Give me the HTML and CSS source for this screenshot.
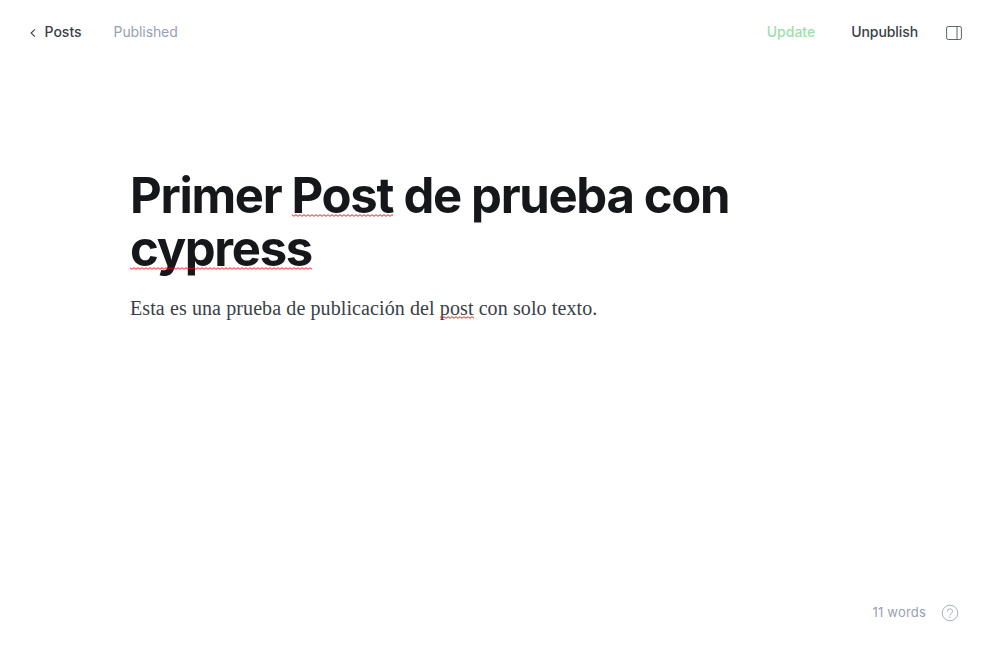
FILE: index.html
```html
<!DOCTYPE html>
<html lang="es">
<head>
<meta charset="utf-8">
<title>Editor</title>
<link rel="stylesheet" href="styles.css">
</head>
<body>
<div class="editor">
  <header class="topbar">
    <a class="back"><svg class="chevron" width="6" height="8" viewBox="0 0 6 8"><path d="M4.9 .4 1.1 4l3.8 3.6"/></svg>Posts</a>
    <span class="status">Published</span>
    <div class="actions">
      <span class="update">Update</span>
      <span class="unpublish">Unpublish</span>
      <svg class="panel" width="16" height="16" viewBox="0 0 16 16"><rect x=".6" y="1.5" width="14.8" height="13" rx="1.6"/><path d="M11 1.5v13"/></svg>
    </div>
  </header>
  <main class="content">
    <h1 class="title">Primer <span class="misspelled">Post</span> de prueba con <span class="misspelled">cypress</span></h1>
    <p class="text">Esta es una prueba de publicación del <span class="misspelled">post</span> con solo texto.</p>
  </main>
  <footer class="footer">
    <span class="count">11 words</span>
    <svg class="help" width="18" height="18" viewBox="0 0 18 18"><circle cx="9" cy="9" r="7.8"/><path d="M6.5 7.4a2.5 2.5 0 1 1 3.6 2.1c-.8.4-1.1.8-1.1 1.9"/><circle class="dot" cx="9" cy="13.1" r=".7"/></svg>
  </footer>
</div>
</body>
</html>
```
FILE: styles.css
```css
* { box-sizing: border-box; }
body { margin: 0; background: #fff; font-family: Inter, sans-serif; }
.editor { height: 660px; display: flex; flex-direction: column; }
.topbar { height: 64px; padding: 0 38px 0 30px; display: flex; align-items: center; font-size: 14px; line-height: 20px; }
.back { display: flex; align-items: center; gap: 8.5px; color: #394047; font-weight: 500; }
.chevron { fill: none; stroke: #394047; stroke-width: 1.1; margin-top: 2px; }
.status { margin-left: 32px; color: #95a1b5; letter-spacing: -.1px; }
.actions { margin-left: auto; display: flex; align-items: center; font-weight: 500; }
.update { color: #9bdfa9; }
.unpublish { margin-left: 36px; color: #394047; letter-spacing: -.08px; }
.panel { margin: 2px 0 0 28px; fill: none; stroke: #5d646b; }
.content { flex: 1; width: 740px; margin: 0 auto; padding-top: 105px; }
.title { margin: 0; font-size: 49px; line-height: 53px; font-weight: 700; letter-spacing: -1.32px; color: #15171a; }
.text { margin: 17px 0 0; font-family: "Liberation Serif", serif; font-size: 20px; line-height: 32px; letter-spacing: .1px; color: #394047; }
/* compact 4px-period zigzag spelling marker, drawn over the letters */
.misspelled { position: relative; }
.misspelled::after { content: ""; position: absolute; left: 0; right: 0; bottom: 8px; height: 3px; background: url("data:image/svg+xml,%3Csvg xmlns='http://www.w3.org/2000/svg' width='4' height='3'%3E%3Cpath d='M-1 1.5 0 .7 2 2.3 4 .7 5 1.5' fill='none' stroke='red' stroke-width='.9'/%3E%3C/svg%3E") repeat-x; }
.text .misspelled::after { bottom: 0; }
.footer { height: 94px; padding: 0 41px 1px 0; display: flex; justify-content: flex-end; align-items: center; gap: 15px; font-size: 13px; line-height: 16px; color: #95a1b5; letter-spacing: .2px; }
.count { margin-bottom: 1px; }
.help { fill: none; stroke: #a9b2c0; margin-top: 1px; }
.dot { fill: #95a1b5; stroke: none; }
```
